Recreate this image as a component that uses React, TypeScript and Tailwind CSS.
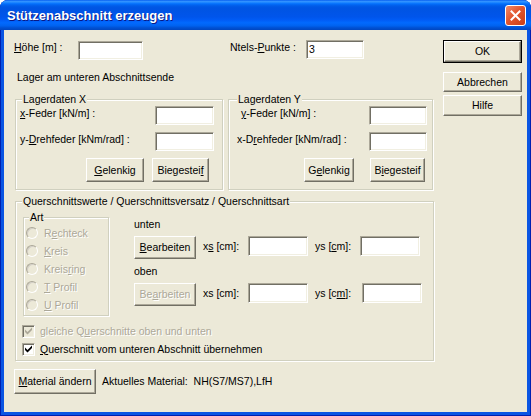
import type { ReactNode } from 'react';

// Windows XP style dialog "Stützenabschnitt erzeugen"

function L({ t, k }: { t: string; k?: number }) {
  if (k === undefined) return <>{t}</>;
  return (
    <>
      {t.slice(0, k)}
      <span className="underline decoration-1 underline-offset-[1px]">{t[k]}</span>
      {t.slice(k + 1)}
    </>
  );
}

function Btn({ children, className = '', disabled = false }: { children: ReactNode; className?: string; disabled?: boolean }) {
  return (
    <button
      type="button"
      className={`flex shrink-0 items-center justify-center border border-b-[#716f64] border-l-white border-r-[#716f64] border-t-white bg-[#ece9d8] shadow-[inset_-1px_-1px_0_#aca899] ${
        disabled ? 'text-[#aca899] [text-shadow:1px_1px_0_#fff]' : 'text-black'
      } ${className}`}
    >
      {children}
    </button>
  );
}

function Field({ className = '', value = '' }: { className?: string; value?: string }) {
  return (
    <div
      className={`flex shrink-0 items-center border border-b-white border-l-[#aca899] border-r-white border-t-[#aca899] bg-white px-[2px] shadow-[inset_1px_1px_0_#716f64,inset_-1px_-1px_0_#f1efe2] ${className}`}
    >
      {value}
    </div>
  );
}

function Group({ title, className = '', labelClass = 'ml-[6px]', children }: { title: ReactNode; className?: string; labelClass?: string; children: ReactNode }) {
  return (
    <div className={`shrink-0 border border-[#d0d0bf] shadow-[inset_1px_1px_0_#fff,1px_1px_0_#fff] ${className}`}>
      <div className={`-mt-[7px] w-fit bg-[#ece9d8] px-[1px] leading-[13px] ${labelClass}`}>{title}</div>
      {children}
    </div>
  );
}

function Radio({ children }: { children: ReactNode }) {
  return (
    <div className="flex h-[18px] items-center">
      <div className="ml-[2px] h-[12px] w-[12px] rounded-full border border-b-white border-l-[#aca899] border-r-white border-t-[#aca899] bg-[#ece9d8] shadow-[inset_1px_1px_0_#d4d0c8]" />
      <span className="ml-[6px] text-[#aca899] [text-shadow:1px_1px_0_#fff]">{children}</span>
    </div>
  );
}

function Check({ children, disabled = false }: { children: ReactNode; disabled?: boolean }) {
  return (
    <div className="flex h-[18px] items-center">
      <div
        className={`ml-[6px] flex h-[13px] w-[13px] items-center justify-center border border-b-white border-l-[#aca899] border-r-white border-t-[#aca899] shadow-[inset_1px_1px_0_#716f64,inset_-1px_-1px_0_#f1efe2] ${
          disabled ? 'bg-[#ece9d8]' : 'bg-white'
        }`}
      >
        <svg width="7" height="8" viewBox="0 0 7 8">
          <polygon points="0,2.5 2.5,5 7,0.5 7,3 2.5,7.5 0,5" fill={disabled ? '#aca899' : '#000'} />
        </svg>
      </div>
      <span className={`ml-[5px] ${disabled ? 'text-[#aca899] [text-shadow:1px_1px_0_#fff]' : ''}`}>{children}</span>
    </div>
  );
}

function TitleBar() {
  return (
    <div className="flex h-[30px] shrink-0 items-center bg-[linear-gradient(to_bottom,#0058ee_0%,#3593ff_4%,#288eff_7%,#127dff_10%,#036ffc_13%,#0262ee_17%,#0057e5_23%,#0054e3_30%,#0055eb_56%,#005bf5_66%,#026afe_76%,#0062ef_86%,#0052d6_92%,#0046c0_100%)] pl-[7px] pr-[5px]">
      <span className="pt-[1px] font-['Liberation_Sans',Arial,sans-serif] text-[13px] font-bold text-white [text-shadow:1px_1px_0_#0a1883]">
        Stützenabschnitt erzeugen
      </span>
      <div className="ml-auto flex h-[21px] w-[21px] items-center justify-center rounded-[3px] border border-white bg-[linear-gradient(135deg,#f08a6c_0%,#e2562f_45%,#c83d16_100%)]">
        <svg width="11" height="11" viewBox="0 0 11 11">
          <path d="M1.5 1.5 L9.5 9.5 M9.5 1.5 L1.5 9.5" stroke="#fff" strokeWidth="2" strokeLinecap="square" />
        </svg>
      </div>
    </div>
  );
}

export default function App() {
  return (
    <div className="h-[416px] w-[531px] bg-white font-['Liberation_Sans',Arial,sans-serif] text-[10.5px] leading-[13px] text-black">
      <div className="flex h-full flex-col overflow-hidden rounded-t-[8px] bg-[#0a55e3] shadow-[inset_1px_0_0_#0020b0,inset_-1px_0_0_#0020b0,inset_0_-1px_0_#0020b0]">
        <TitleBar />
        <div className="mx-[4px] mb-[4px] flex flex-1 bg-[#ece9d8] pl-[10px] pt-[10px]">
          {/* left column */}
          <div className="flex w-[420px] flex-col">
            <div className="flex h-[20px] items-start">
              <span className="mt-[1px] w-[64px] shrink-0">
                <L t="Höhe [m] :" k={0} />
              </span>
              <Field className="mt-[1px] h-[19px] w-[65px]" />
              <span className="ml-[87px] mt-[1px] w-[76px] shrink-0">
                <L t="Ntels-Punkte :" k={6} />
              </span>
              <Field className="h-[19px] w-[58px]" value="3" />
            </div>

            <div className="mt-[11px] pl-[3px]">Lager am unteren Abschnittsende</div>

            <div className="ml-[1px] mt-[15px] flex gap-[5px]">
              <Group title="Lagerdaten X" className="h-[91px] w-[208px]">
                <div className="flex items-start pl-[4px]">
                  <span className="mt-[1px] w-[135px] shrink-0">
                    <L t="x-Feder [kN/m] :" k={0} />
                  </span>
                  <Field className="h-[19px] w-[59px]" />
                </div>
                <div className="mt-[7px] flex items-start pl-[4px]">
                  <span className="mt-[1px] w-[135px] shrink-0">
                    <L t="y-Drehfeder [kNm/rad] :" k={2} />
                  </span>
                  <Field className="h-[19px] w-[59px]" />
                </div>
                <div className="mt-[7px] flex gap-[8px] pl-[70px]">
                  <Btn className="h-[24px] w-[58px]">
                    <L t="Gelenkig" k={0} />
                  </Btn>
                  <Btn className="h-[24px] w-[57px]">
                    <L t="Biegesteif" k={9} />
                  </Btn>
                </div>
              </Group>

              <Group title="Lagerdaten Y" className="h-[91px] w-[205px]" labelClass="ml-[8px]">
                <div className="flex items-start pl-[12px]">
                  <span className="mt-[1px] w-[128px] shrink-0">
                    <L t="y-Feder [kN/m] :" k={0} />
                  </span>
                  <Field className="h-[19px] w-[58px]" />
                </div>
                <div className="mt-[7px] flex items-start pl-[8px]">
                  <span className="mt-[1px] w-[132px] shrink-0">
                    <L t="x-Drehfeder [kNm/rad] :" k={3} />
                  </span>
                  <Field className="h-[19px] w-[58px]" />
                </div>
                <div className="mt-[7px] flex gap-[16px] pl-[75px]">
                  <Btn className="h-[24px] w-[50px]">
                    <L t="Gelenkig" k={1} />
                  </Btn>
                  <Btn className="h-[24px] w-[55px]">
                    <L t="Biegesteif" k={1} />
                  </Btn>
                </div>
              </Group>
            </div>

            <Group
              title="Querschnittswerte / Querschnittsversatz / Querschnittsart"
              className="ml-[1px] mt-[11px] h-[160px] w-[419px]"
            >
              <div className="mt-[9px] flex">
                <Group title="Art" className="ml-[7px] h-[99px] w-[86px]" labelClass="ml-[5px]">
                  <Radio>
                    <L t="Rechteck" k={1} />
                  </Radio>
                  <Radio>
                    <L t="Kreis" k={0} />
                  </Radio>
                  <Radio>
                    <L t="Kreisring" k={5} />
                  </Radio>
                  <Radio>
                    <L t="T Profil" k={0} />
                  </Radio>
                  <Radio>
                    <L t="U Profil" k={0} />
                  </Radio>
                </Group>

                <div className="ml-[25px] flex flex-col">
                  <span className="mt-[1px]">unten</span>
                  <div className="mt-[5px] flex items-start">
                    <Btn className="h-[23px] w-[62px]">
                      <L t="Bearbeiten" k={0} />
                    </Btn>
                    <span className="ml-[7px] mt-[4px] w-[45px] shrink-0">
                      <L t="xs [cm]:" k={1} />
                    </span>
                    <Field className="h-[20px] w-[60px]" />
                    <span className="ml-[7px] mt-[4px] w-[45px] shrink-0">
                      <L t="ys [cm]:" k={4} />
                    </span>
                    <Field className="h-[20px] w-[60px]" />
                  </div>
                  <span className="mt-[6px]">oben</span>
                  <div className="mt-[5px] flex items-start">
                    <Btn className="h-[23px] w-[62px]" disabled>
                      <L t="Bearbeiten" k={2} />
                    </Btn>
                    <span className="ml-[7px] mt-[4px] w-[45px] shrink-0">xs [cm]:</span>
                    <Field className="h-[20px] w-[60px]" />
                    <span className="ml-[7px] mt-[4px] w-[47px] shrink-0">
                      <L t="ys [cm]:" k={5} />
                    </span>
                    <Field className="h-[20px] w-[60px]" />
                  </div>
                </div>
              </div>
              <div className="mt-[6px]">
                <Check disabled>
                  <L t="gleiche Querschnitte oben und unten" k={9} />
                </Check>
                <Check>
                  <L t="Querschnitt vom unteren Abschnitt übernehmen" k={0} />
                </Check>
              </div>
            </Group>

            <div className="mt-[8px] flex items-center">
              <Btn className="h-[25px] w-[82px]">
                <L t="Material ändern" k={0} />
              </Btn>
              <span className="ml-[6px] whitespace-pre">Aktuelles Material:  NH(S7/MS7),LfH</span>
            </div>
          </div>

          {/* right column */}
          <div className="ml-[9px] flex w-[79px] flex-col">
            <div className="h-[23px] w-[79px] border border-black">
              <Btn className="h-full w-full">OK</Btn>
            </div>
            <Btn className="mt-[9px] h-[20px] w-[79px]">Abbrechen</Btn>
            <Btn className="mt-[3px] h-[21px] w-[79px]">Hilfe</Btn>
          </div>
        </div>
      </div>
    </div>
  );
}
